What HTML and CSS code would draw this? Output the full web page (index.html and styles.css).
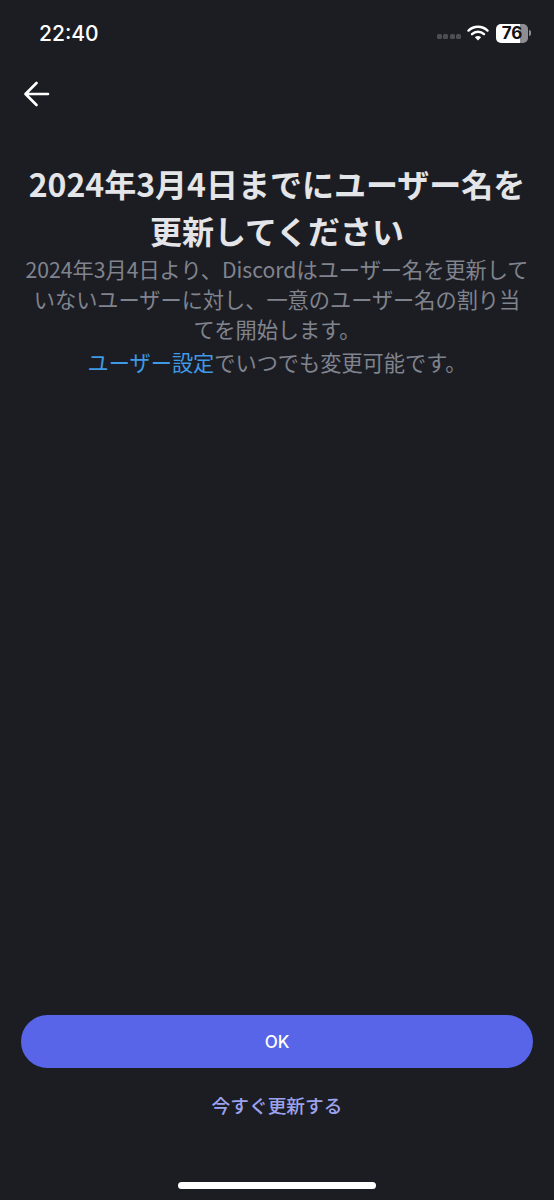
FILE: index.html
```html
<!DOCTYPE html>
<html lang="ja">
<head>
    <meta charset="UTF-8">
    <meta name="viewport" content="width=device-width, initial-scale=1.0">
    <title>ユーザー名の更新</title>
    <link rel="stylesheet" href="styles.css">
</head>
<body>
    <div class="status-bar">
        <span class="status-time">22:40</span>
        <div class="status-icons">
            <div class="signal-dots"><i></i><i></i><i></i><i></i></div>
            <svg class="wifi" viewBox="0 0 22 16" width="22" height="16">
                <path d="M1.5 5.6a13.6 13.6 0 0 1 19 0" fill="none" stroke="#fff" stroke-width="2.4" stroke-linecap="round"/>
                <path d="M5 9.2a8.6 8.6 0 0 1 12 0" fill="none" stroke="#fff" stroke-width="2.4" stroke-linecap="round"/>
                <path d="M7.9 12.2 11 15.6l3.1-3.4a4.4 4.4 0 0 0-6.2 0z" fill="#fff"/>
            </svg>
            <div class="battery">
                <div class="battery-body"><span class="battery-level">76</span></div>
                <div class="battery-tip"></div>
            </div>
        </div>
    </div>

    <div class="top-nav">
        <svg class="back-arrow" viewBox="0 0 26 26" width="26" height="26">
            <path d="M24 13H2M12.5 2 1.5 13l11 11" fill="none" stroke="#fff" stroke-width="2.6" stroke-linecap="round" stroke-linejoin="round"/>
        </svg>
    </div>

    <main class="content">
        <h1 class="title">2024年3月4日までにユーザー名を更新してください</h1>
        <p class="description">2024年3月4日より、Discordはユーザー名を更新していないユーザーに対し、一意のユーザー名の割り当てを開始します。</p>
        <p class="settings-note"><a href="#">ユーザー設定</a>でいつでも変更可能です。</p>
    </main>

    <div class="actions">
        <button class="btn-ok">OK</button>
        <a class="link-update" href="#">今すぐ更新する</a>
    </div>

    <div class="home-indicator"></div>
</body>
</html>
```

FILE: styles.css
```css
body {
    font-family: "Noto Sans CJK JP", "Inter", sans-serif;
    background-color: #1c1d23;
    margin: 0;
    height: 1200px;
    display: flex;
    flex-direction: column;
    overflow: hidden;
}

/* Barra de status */
.status-bar {
    display: flex;
    justify-content: space-between;
    align-items: center;
    height: 24px;
    padding: 21px 23px 0 39px;
}

.status-time {
    font-family: "Inter", sans-serif;
    font-size: 21px;
    font-weight: 500;
    color: #fff;
}

.status-icons {
    display: flex;
    align-items: center;
}

.signal-dots {
    display: flex;
    gap: 1.5px;
    margin: 6px 6px 0 0;
}

.signal-dots i {
    width: 5px;
    height: 5px;
    border-radius: 1.5px;
    background-color: #4d4e53;
}

.wifi {
    margin-right: 7px;
}

.battery {
    display: flex;
    align-items: center;
}

.battery-body {
    width: 32px;
    height: 19px;
    border-radius: 5px;
    background: linear-gradient(to right, #fff 76%, #8e8e92 76%);
    text-align: center;
}

.battery-level {
    display: block;
    font-family: "Inter", sans-serif;
    font-size: 17px;
    font-weight: 700;
    line-height: 19px;
    color: #111;
}

.battery-tip {
    width: 2px;
    height: 6px;
    margin-left: 1px;
    border-radius: 0 2px 2px 0;
    background-color: #8e8e92;
}

.top-nav {
    padding: 36px 0 0 24px;
    height: 26px;
}

.back-arrow {
    display: block;
}

.content {
    flex: 1;
    padding: 0 24px;
    margin-top: 53px;
    text-align: center;
}

.title {
    margin: 0;
    font-size: 32px;
    font-weight: 700;
    line-height: 47px;
    color: #e4e5e8;
}

.description {
    margin: 0;
    font-size: 21.2px;
    line-height: 30px;
    color: #80848e;
}

.settings-note {
    margin: 3px 0 0 0;
    font-size: 21.2px;
    line-height: 30px;
    color: #80848e;
}

.settings-note a {
    color: #3f9ae6;
    text-decoration: none;
}

.actions {
    display: flex;
    flex-direction: column;
    align-items: center;
    padding: 0 21px;
}

.btn-ok {
    width: 100%;
    height: 53px;
    border: none;
    border-radius: 27px;
    background-color: #5865e9;
    color: #fff;
    font-family: "Inter", sans-serif;
    font-size: 17px;
    font-weight: 500;
}

.link-update {
    margin-top: 23px;
    font-size: 18.7px;
    font-weight: 500;
    line-height: 28px;
    color: #9ca3ee;
    text-decoration: none;
}

.home-indicator {
    width: 198px;
    height: 7px;
    margin: 63px auto 11px;
    border-radius: 4px;
    background-color: #fff;
}
```
